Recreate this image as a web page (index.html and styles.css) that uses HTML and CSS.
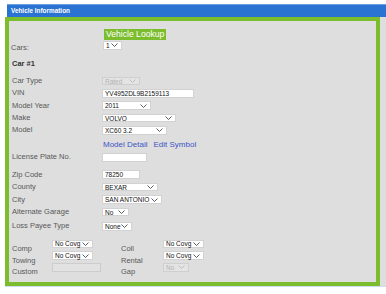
FILE: index.html
```html
<!DOCTYPE html>
<html lang="en">
<head>
    <meta charset="UTF-8">
    <title>Vehicle Information</title>
    <link rel="stylesheet" href="styles.css">
</head>
<body>
    <div class="header">Vehicle Information</div>
    <div class="panel">
        <div class="box">
            <div class="lookup"><button class="lookup-btn">Vehicle Lookup</button></div>
            <div class="row cars">
                <span class="label">Cars:</span>
                <span class="sel w19"><span>1</span><svg class="chev" viewBox="0 0 7 4"><path d="M0.5 0.5 L3.5 3.5 L6.5 0.5"/></svg></span>
            </div>
            <div class="car-title">Car #1</div>

            <div class="row">
                <span class="label">Car Type</span>
                <span class="sel w38 disabled"><span>Rated</span><svg class="chev" viewBox="0 0 7 4"><path d="M0.5 0.5 L3.5 3.5 L6.5 0.5"/></svg></span>
            </div>
            <div class="row">
                <span class="label">VIN</span>
                <input class="inp w92" type="text" value="YV4952DL9B2159113">
            </div>
            <div class="row">
                <span class="label">Model Year</span>
                <span class="sel w49"><span>2011</span><svg class="chev" viewBox="0 0 7 4"><path d="M0.5 0.5 L3.5 3.5 L6.5 0.5"/></svg></span>
            </div>
            <div class="row">
                <span class="label">Make</span>
                <span class="sel w74"><span>VOLVO</span><svg class="chev" viewBox="0 0 7 4"><path d="M0.5 0.5 L3.5 3.5 L6.5 0.5"/></svg></span>
            </div>
            <div class="row">
                <span class="label">Model</span>
                <span class="sel w65"><span>XC60 3.2</span><svg class="chev" viewBox="0 0 7 4"><path d="M0.5 0.5 L3.5 3.5 L6.5 0.5"/></svg></span>
            </div>
            <div class="row links">
                <span class="label"></span>
                <a href="#">Model Detail</a>
                <a href="#">Edit Symbol</a>
            </div>
            <div class="row plate">
                <span class="label">License Plate No.</span>
                <input class="inp w45 tall" type="text" value="">
            </div>

            <div class="group">
                <div class="row r2">
                    <span class="label">Zip Code</span>
                    <input class="inp w38" type="text" value="78250">
                </div>
                <div class="row r2">
                    <span class="label">County</span>
                    <span class="sel w56"><span>BEXAR</span><svg class="chev" viewBox="0 0 7 4"><path d="M0.5 0.5 L3.5 3.5 L6.5 0.5"/></svg></span>
                </div>
                <div class="row r2">
                    <span class="label">City</span>
                    <span class="sel w60"><span>SAN ANTONIO</span><svg class="chev" viewBox="0 0 7 4"><path d="M0.5 0.5 L3.5 3.5 L6.5 0.5"/></svg></span>
                </div>
                <div class="row r2">
                    <span class="label">Alternate Garage</span>
                    <span class="sel w27"><span>No</span><svg class="chev" viewBox="0 0 7 4"><path d="M0.5 0.5 L3.5 3.5 L6.5 0.5"/></svg></span>
                </div>
                <div class="row r2 loss">
                    <span class="label">Loss Payee Type</span>
                    <span class="sel w30"><span>None</span><svg class="chev" viewBox="0 0 7 4"><path d="M0.5 0.5 L3.5 3.5 L6.5 0.5"/></svg></span>
                </div>
            </div>

            <div class="coverage">
                <span class="clabel">Comp</span>
                <span class="sel w41"><span>No Covg</span><svg class="chev" viewBox="0 0 7 4"><path d="M0.5 0.5 L3.5 3.5 L6.5 0.5"/></svg></span>
                <span class="clabel">Coll</span>
                <span class="sel w41"><span>No Covg</span><svg class="chev" viewBox="0 0 7 4"><path d="M0.5 0.5 L3.5 3.5 L6.5 0.5"/></svg></span>

                <span class="clabel">Towing</span>
                <span class="sel w41"><span>No Covg</span><svg class="chev" viewBox="0 0 7 4"><path d="M0.5 0.5 L3.5 3.5 L6.5 0.5"/></svg></span>
                <span class="clabel">Rental</span>
                <span class="sel w41"><span>No Covg</span><svg class="chev" viewBox="0 0 7 4"><path d="M0.5 0.5 L3.5 3.5 L6.5 0.5"/></svg></span>

                <span class="clabel">Custom</span>
                <input class="inp w49 tall disabled" type="text" value="" disabled>
                <span class="clabel">Gap</span>
                <span class="sel w26 disabled"><span>No</span><svg class="chev" viewBox="0 0 7 4"><path d="M0.5 0.5 L3.5 3.5 L6.5 0.5"/></svg></span>
            </div>
        </div>
    </div>
</body>
</html>
```

FILE: styles.css
```css
html, body {
    margin: 0;
    padding: 0;
}
body {
    background: #fff;
    font-family: "Liberation Sans", Arial, sans-serif;
    width: 386px;
    height: 294px;
    overflow: hidden;
}
.header {
    margin: 4px 0 0 7px;
    height: 13px;
    box-sizing: border-box;
    border-top: 1px solid #6c9fe2;
    background: #2b73d3;
    color: #fff;
    font-size: 6.4px;
    font-weight: bold;
    line-height: 12px;
    padding-left: 4px;
}
.panel {
    margin-left: 5px;
    background: #dedede;
    border-bottom: 1px solid #c9dcf3;
    display: flex;
}
.box {
    width: 375px;
    height: 269px;
    box-sizing: border-box;
    border: 4px solid #7cbd2e;
    background: #dedede;
    padding-left: 3px;
}
.lookup {
    margin: 8px 0 0 92px;
    height: 11px;
    display: flex;
}
.lookup-btn {
    background: #7cbd2e;
    color: #fff;
    border: none;
    padding: 0 2px;
    margin: 0;
    height: 11px;
    font-family: inherit;
    font-size: 8.6px;
    line-height: 11px;
}
.row {
    display: flex;
    align-items: center;
    height: 12.3px;
}
.label {
    flex: 0 0 90px;
    font-size: 7.5px;
    color: #585858;
    line-height: 8px;
}
.row.cars {
    height: 12px;
    align-items: flex-start;
}
.row.cars .label {
    align-self: flex-end;
    flex-basis: 92px;
    margin-left: -1px;
}
.row.cars .sel {
    margin-top: 1px;
}
.car-title {
    height: 23px;
    line-height: 23px;
    font-size: 7.5px;
    font-weight: bold;
    color: #333;
}
.links {
    margin-top: 2.3px;
    gap: 6px;
}
.links .label {
    flex-basis: 85px;
}
.links a {
    color: #3c55c6;
    text-decoration: none;
    font-size: 8px;
}
.plate {
    height: 12px;
}
.group {
    margin-top: 5.2px;
}
.row.r2 {
    height: 12.5px;
}
.row.loss {
    margin-top: 1.8px;
}
.sel {
    display: flex;
    align-items: center;
    justify-content: space-between;
    box-sizing: border-box;
    height: 8.5px;
    background: #fff;
    border: 1px solid #d2d2d2;
    padding: 0 3px 0 2px;
    font-size: 6.5px;
    color: #111;
    line-height: 7px;
    white-space: nowrap;
}
.sel.disabled {
    background: #e4e4e4;
    border-color: #cfcfcf;
    color: #b2b2b2;
}
.chev {
    width: 7px;
    height: 4px;
    flex: 0 0 7px;
}
.chev path {
    fill: none;
    stroke: #333;
    stroke-width: 0.8;
}
.sel.disabled .chev path {
    stroke: #b5b5b5;
}
.inp {
    box-sizing: border-box;
    height: 8.5px;
    margin: 0;
    background: #fff;
    border: 1px solid #d2d2d2;
    padding: 0 2px;
    font-family: inherit;
    font-size: 6.5px;
    color: #111;
    outline: none;
}
.inp.tall {
    height: 9px;
}
.inp.disabled {
    background: #e2e2e2;
    border-color: #cdcdcd;
}
.coverage {
    margin-top: 6.5px;
    display: grid;
    grid-template-columns: 40px 69px 42px auto;
    grid-auto-rows: 11.8px;
    align-items: start;
}
.coverage .sel,
.coverage .inp {
    margin-top: 0.5px;
}
.clabel {
    align-self: end;
    margin-bottom: -2px;
    font-size: 7.5px;
    line-height: 8px;
    color: #585858;
}
.w19 { width: 19px; }
.w26 { width: 26px; }
.w27 { width: 27px; }
.w30 { width: 30px; }
.w38 { width: 38px; }
.w41 { width: 41px; }
.w45 { width: 45px; }
.w49 { width: 49px; }
.w56 { width: 56px; }
.w60 { width: 60px; }
.w65 { width: 65px; }
.w74 { width: 74px; }
.w92 { width: 92px; }
```
